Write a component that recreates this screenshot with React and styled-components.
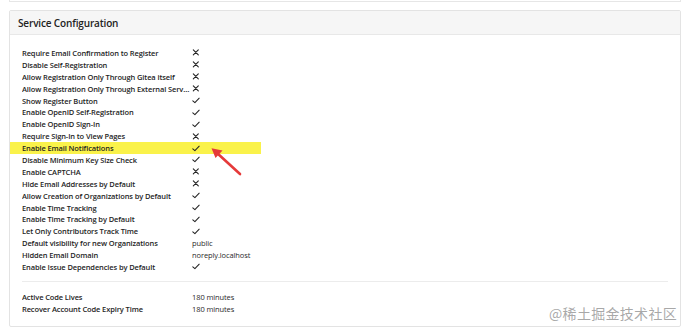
import React from "react";
import styled, { createGlobalStyle } from "styled-components";

const GlobalStyle = createGlobalStyle`
  html, body { margin: 0; padding: 0; background: #ffffff; }
  body { font-family: "Open Sans", "Noto Sans", sans-serif; color: #1f1f1f; }
`;

const Page = styled.div`
  position: relative;
  width: 690px;
  height: 333px;
  overflow: hidden;
  padding: 0 9px;
  box-sizing: border-box;
`;

const PrevCard = styled.div`
  height: 1px;
  border: 1px solid #e6e6e6;
  border-top: none;
`;

const Card = styled.section`
  margin-top: 8px;
  border: 1px solid #e3e3e3;
  border-radius: 2px;
  background: #fff;
`;

const Header = styled.header`
  height: 23px;
  display: flex;
  align-items: center;
  padding: 0 8px;
  background: #f6f6f6;
  border-bottom: 1px solid #e8e8e8;
`;

const Title = styled.h4`
  margin: 0;
  font-size: 10px;
  font-weight: 600;
  letter-spacing: -0.15px;
  color: #222;
`;

const Body = styled.div`
  position: relative;
  padding: 12px 12px 11px;
`;

const List = styled.dl`
  margin: 0;
`;

const Row = styled.div`
  display: grid;
  grid-template-columns: 169px 1fr;
  align-items: center;
  height: 11.9px;
  margin: 0 -12px;
  padding: 0 12px;
  background: ${(p) =>
    p.$highlight
      ? "linear-gradient(to right, #faf24a 0, #faf24a 251px, transparent 251px)"
      : "transparent"};
`;

const Label = styled.dt`
  margin: 0;
  font-size: 7.5px;
  font-weight: 600;
  letter-spacing: -0.12px;
  color: #1e1e1e;
  white-space: nowrap;
  overflow: hidden;
  text-overflow: ellipsis;
  padding-right: 1px;
`;

const Value = styled.dd`
  margin: 0;
  font-size: 7.5px;
  letter-spacing: -0.1px;
  color: #2a2a2a;
  display: flex;
  align-items: center;
  padding-left: 1px;
`;

const Divider = styled.hr`
  margin: 8px 0 9px;
  border: none;
  border-top: 1px solid #ececec;
  height: 0;
`;

const Arrow = styled.svg`
  position: absolute;
  left: 188px;
  top: 103px;
  width: 50px;
  height: 42px;
  overflow: visible;
`;

const Watermark = styled.div`
  position: absolute;
  right: 13px;
  top: 304px;
  font-family: "Noto Sans CJK SC", sans-serif;
  font-size: 14px;
  line-height: 18px;
  color: rgba(140, 140, 140, 0.75);
  letter-spacing: 0.3px;
`;

const Check = () => (
  <svg width="8" height="7" viewBox="0 0 8 7">
    <path d="M0.8 3.8 L2.9 5.6 L7.2 1.2" fill="none" stroke="#222" strokeWidth="1.05" strokeLinecap="round" strokeLinejoin="round" />
  </svg>
);

const Cross = () => (
  <svg width="8" height="7" viewBox="0 0 8 7">
    <path d="M1.3 0.8 L6.3 5.8 M6.3 0.8 L1.3 5.8" fill="none" stroke="#222" strokeWidth="1.1" strokeLinecap="round" />
  </svg>
);

const rows = [
  ["Require Email Confirmation to Register", false],
  ["Disable Self-Registration", false],
  ["Allow Registration Only Through Gitea itself", false],
  ["Allow Registration Only Through External Services", false],
  ["Show Register Button", true],
  ["Enable OpenID Self-Registration", true],
  ["Enable OpenID Sign-In", true],
  ["Require Sign-In to View Pages", false],
  ["Enable Email Notifications", true, true],
  ["Disable Minimum Key Size Check", true],
  ["Enable CAPTCHA", false],
  ["Hide Email Addresses by Default", false],
  ["Allow Creation of Organizations by Default", true],
  ["Enable Time Tracking", true],
  ["Enable Time Tracking by Default", true],
  ["Let Only Contributors Track Time", true],
  ["Default visibility for new Organizations", "public"],
  ["Hidden Email Domain", "noreply.localhost"],
  ["Enable Issue Dependencies by Default", true],
];

const codes = [
  ["Active Code Lives", "180 minutes"],
  ["Recover Account Code Expiry Time", "180 minutes"],
];

const renderValue = (v) => {
  if (v === true) return <Check />;
  if (v === false) return <Cross />;
  return v;
};

export default function App() {
  return (
    <>
      <GlobalStyle />
      <Page>
        <PrevCard />
        <Card>
          <Header>
            <Title>Service Configuration</Title>
          </Header>
          <Body>
            <List>
              {rows.map(([label, value, hl]) => (
                <Row key={label} $highlight={hl}>
                  <Label>{label}</Label>
                  <Value>{renderValue(value)}</Value>
                </Row>
              ))}
            </List>
            <Divider />
            <List>
              {codes.map(([label, value]) => (
                <Row key={label}>
                  <Label>{label}</Label>
                  <Value>{value}</Value>
                </Row>
              ))}
            </List>
            <Arrow viewBox="0 0 50 42">
              <line x1="42" y1="36" x2="19" y2="15" stroke="#e53a3a" strokeWidth="2.6" strokeLinecap="round" />
              <polygon points="13.5,10.3 24.5,12.5 17.5,20" fill="#e53a3a" />
            </Arrow>
          </Body>
        </Card>
        <Watermark>@稀土掘金技术社区</Watermark>
      </Page>
    </>
  );
}
